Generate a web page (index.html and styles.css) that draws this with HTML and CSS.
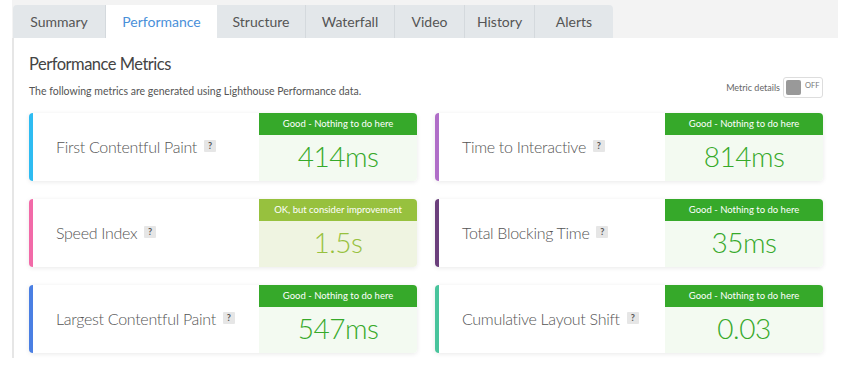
FILE: index.html
```html
<!DOCTYPE html>
<html>
<head>
<meta charset="utf-8">
<link rel="stylesheet" href="styles.css">
</head>
<body>
<div class="page">
  <nav class="tabs">
    <div class="tab">Summary</div>
    <div class="tab active">Performance</div>
    <div class="tab">Structure</div>
    <div class="tab">Waterfall</div>
    <div class="tab">Video</div>
    <div class="tab">History</div>
    <div class="tab last">Alerts</div>
  </nav>
  <section class="panel">
    <h2 class="title">Performance Metrics</h2>
    <div class="subrow">
      <p class="desc">The following metrics are generated using Lighthouse Performance data.</p>
      <div class="toggle-wrap">
        <span class="toggle-label">Metric details</span>
        <span class="toggle"><span class="knob"></span><span class="off">OFF</span></span>
      </div>
    </div>
    <div class="grid">
      <div class="card c-fcp">
        <div class="name">First Contentful Paint <span class="help">?</span></div>
        <div class="status good"><div class="grade">Good - Nothing to do here</div><div class="value">414ms</div></div>
      </div>
      <div class="card c-tti">
        <div class="name">Time to Interactive <span class="help">?</span></div>
        <div class="status good"><div class="grade">Good - Nothing to do here</div><div class="value">814ms</div></div>
      </div>
      <div class="card c-si">
        <div class="name">Speed Index <span class="help">?</span></div>
        <div class="status ok"><div class="grade">OK, but consider improvement</div><div class="value">1.5s</div></div>
      </div>
      <div class="card c-tbt">
        <div class="name">Total Blocking Time <span class="help">?</span></div>
        <div class="status good"><div class="grade">Good - Nothing to do here</div><div class="value">35ms</div></div>
      </div>
      <div class="card c-lcp">
        <div class="name">Largest Contentful Paint <span class="help">?</span></div>
        <div class="status good"><div class="grade">Good - Nothing to do here</div><div class="value">547ms</div></div>
      </div>
      <div class="card c-cls">
        <div class="name">Cumulative Layout Shift <span class="help">?</span></div>
        <div class="status good"><div class="grade">Good - Nothing to do here</div><div class="value">0.03</div></div>
      </div>
    </div>
  </section>
</div>
</body>
</html>
```
FILE: styles.css
```css
* { box-sizing: border-box; }
html, body { margin: 0; padding: 0; background: #fff; }
body { font-family: Lato, "Open Sans", sans-serif; color: #555; }

.page { margin-left: 12px; width: 826px; }

.tabs {
  display: flex;
  height: 38px;
  padding-top: 5px;
  background: #f3f3f3;
}
.tab {
  height: 33px;
  line-height: 33px;
  font-size: 14px;
  color: #555;
  text-align: center;
  background: #e3e7ea;
  border-right: 1px solid #d4d9dd;
}
.tab:first-child { margin-left: 1px; width: 93px; border-radius: 4px 0 0 0; }
.tab.active { background: #fff; color: #4a90d9; width: 111px; border-right: 0; }
.tab:nth-child(3), .tab:nth-child(4) { width: 89px; }
.tab:nth-child(5), .tab:nth-child(6) { width: 70px; }
.tab.last { width: 78px; border-right: 0; border-radius: 0 4px 0 0; }

.panel {
  border-left: 2px solid #e6e6e6;
  padding: 14px 15px 5px 15px;
  height: 320px;
}
.title {
  margin: 0;
  font-size: 16.5px;
  font-weight: 400;
  letter-spacing: -0.5px;
  color: #444;
  line-height: 24px;
}
.subrow {
  display: flex;
  justify-content: space-between;
  align-items: flex-end;
  margin-top: 1px;
}
.desc { margin: 0 0 4px; font-size: 10.5px; color: #555; line-height: 14px; }
.toggle-wrap { display: flex; align-items: center; gap: 3px; margin-bottom: 4px; }
.toggle-label { font-size: 9px; color: #666; }
.toggle {
  display: flex;
  align-items: flex-start;
  width: 40px;
  height: 21px;
  border: 1px solid #ddd;
  border-radius: 3px;
  padding: 2px;
  gap: 4px;
}
.knob { width: 15px; height: 15px; background: #999; border-radius: 2px; }
.off { font-size: 7.5px; color: #777; line-height: 9px; margin-top: 1px; }

.grid {
  display: grid;
  grid-template-columns: 388px 388px;
  grid-auto-rows: 68px;
  column-gap: 18px;
  row-gap: 18px;
  margin-top: 11px;
}
.card {
  display: flex;
  background: #fff;
  border-radius: 4px;
  border-left: 4px solid #2ebcf2;
  box-shadow: 0 1px 5px rgba(0,0,0,0.09);
  overflow: hidden;
}
.c-fcp { border-left-color: #2ebcf2; }
.c-tti { border-left-color: #b06ec8; }
.c-si  { border-left-color: #f26aa8; }
.c-tbt { border-left-color: #6b3f7c; }
.c-lcp { border-left-color: #4a7fe3; }
.c-cls { border-left-color: #48c49c; }

.name {
  flex: 1;
  display: flex;
  align-items: center;
  padding: 0 0 2px 23px;
  font-size: 16px;
  font-weight: 300;
  letter-spacing: -0.3px;
  color: #555;
}
.help {
  display: inline-block;
  width: 12px;
  height: 12px;
  margin-left: 7px;
  background: #e6e6e6;
  color: #555;
  font-size: 9px;
  font-weight: 700;
  letter-spacing: 0;
  line-height: 12px;
  text-align: center;
  border-radius: 1px;
}
.status { width: 158px; display: flex; flex-direction: column; }
.grade {
  height: 22px;
  line-height: 22px;
  text-align: center;
  font-size: 9.5px;
  color: #fff;
}
.value {
  flex: 1;
  display: flex;
  align-items: center;
  justify-content: center;
  font-size: 28px;
  font-weight: 300;
  letter-spacing: -0.5px;
  padding-bottom: 4px;
}
.good .grade { background: #36a92a; }
.good .value { background: #f3faf1; color: #36a92a; }
.ok .grade { background: #97c13e; }
.ok .value { background: #eff4e1; color: #97c13e; }
```
